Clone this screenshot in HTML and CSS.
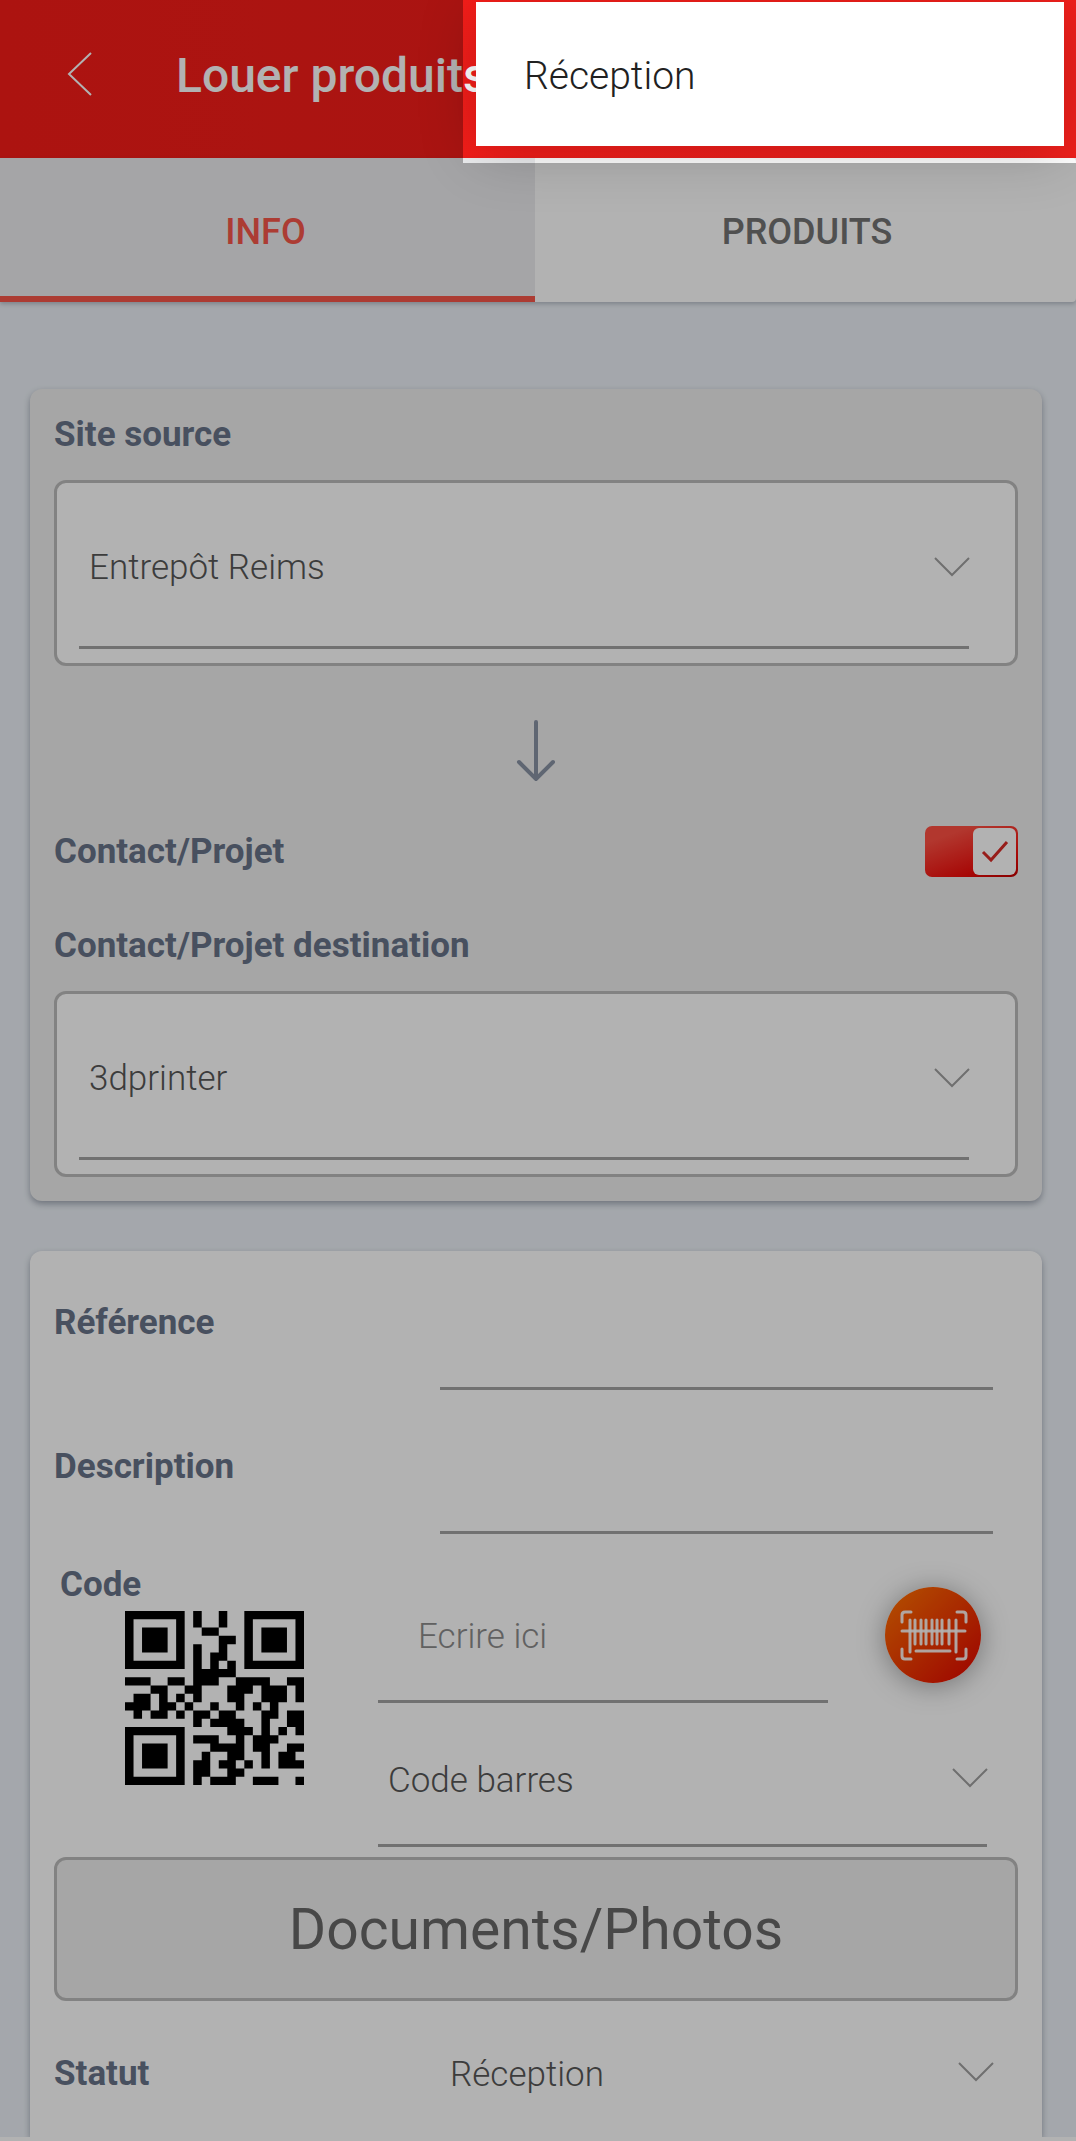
FILE: index.html
```
<!DOCTYPE html>
<html lang="fr">
<head>
<meta charset="utf-8">
<meta name="viewport" content="width=device-width, initial-scale=1">
<title>Louer produits</title>
<link rel="stylesheet" href="styles.css">
</head>
<body>
<header class="topbar">
  <button class="back" type="button" aria-label="Retour">
    <svg width="26" height="46" viewBox="0 0 26 46"><path d="M24 2 2 23 24 44"/></svg>
  </button>
  <h1 class="title">Louer produits</h1>
</header>

<nav class="tabs">
  <a class="tab tab-active" href="#info">INFO</a>
  <a class="tab" href="#produits">PRODUITS</a>
</nav>

<main class="content">
  <section class="card card-grey">
    <label class="label label-block" for="source">Site source</label>
    <div class="box">
      <div class="control control-boxed">
        <select id="source"><option>Entrepôt Reims</option></select>
        <svg class="chevron" width="36" height="20" viewBox="0 0 36 20"><path d="M1 1 18 18 35 1"/></svg>
      </div>
    </div>
    <svg class="arrow" width="40" height="62" viewBox="0 0 40 62"><path d="M20 3V59M3 43 20 60 37 43"/></svg>
    <div class="switch-row">
      <label class="label" for="contact">Contact/Projet</label>
      <span class="switch">
        <input id="contact" type="checkbox" checked>
        <svg class="knob" width="43" height="47" viewBox="0 0 43 47"><path d="M10 24 18 32 34 14"/></svg>
      </span>
    </div>
    <label class="label label-block" for="destination">Contact/Projet destination</label>
    <div class="box">
      <div class="control control-boxed">
        <select id="destination"><option>3dprinter</option></select>
        <svg class="chevron" width="36" height="20" viewBox="0 0 36 20"><path d="M1 1 18 18 35 1"/></svg>
      </div>
    </div>
  </section>

  <section class="card card-white">
    <div class="row">
      <label class="label" for="reference">Référence</label>
      <div class="control"><input id="reference" type="text"></div>
    </div>
    <div class="row">
      <label class="label" for="description">Description</label>
      <div class="control"><input id="description" type="text"></div>
    </div>
    <div class="code">
      <div class="code-side">
        <label class="label" for="code">Code</label>
        <svg class="qr" width="179" height="174" viewBox="0 0 21 21" preserveAspectRatio="none">
          <path fill-rule="evenodd" d="M0 0h7v7H0zM1 1v5h5V1zM2 2h3v3H2zM14 0h7v7h-7zM15 1v5h5V1zM16 2h3v3h-3zM0 14h7v7H0zM1 15v5h5v-5zM2 16h3v3H2z"/>
          <path d="M8 0h1v2H8zM11 0h1v2h-1zM9 2h2v1H9zM11 3h2v1h-2zM8 4h1v3H8zM11 4h1v2h-1zM10 5h1v2h-1zM12 6h1v1h-1zM8 7h5v1H8zM0 8h3v1H0zM5 8h2v1H5zM8 8h3v1H8zM13 8h4v1h-4zM19 8h2v1h-2zM3 9h2v1H3zM7 9h2v1H7zM12 9h3v1h-3zM16 9h3v2h-3zM20 9h1v2h-1zM1 10h2v1H1zM4 10h1v1H4zM6 10h1v1H6zM8 10h1v1H8zM12 10h2v1h-2zM0 11h3v1H0zM4 11h2v1H4zM7 11h1v1H7zM10 11h1v1h-1zM13 11h1v1h-1zM15 11h1v1h-1zM17 11h1v1h-1zM1 12h1v1H1zM3 12h2v1H3zM6 12h1v1H6zM8 12h2v1H8zM11 12h2v1h-2zM16 12h2v1h-2zM19 12h2v2h-2zM8 13h1v1H8zM10 13h4v1h-4zM16 13h1v2h-1zM12 14h3v1h-3zM18 14h1v1h-1zM20 14h1v1h-1zM8 15h3v1H8zM13 15h1v1h-1zM15 15h3v1h-3zM10 16h4v1h-4zM15 16h2v1h-2zM19 16h2v1h-2zM9 17h1v1H9zM12 17h2v1h-2zM16 17h1v2h-1zM18 17h2v1h-2zM8 18h2v2H8zM11 18h2v1h-2zM14 18h1v1h-1zM18 18h3v1h-3zM12 19h2v1h-2zM8 20h1v1H8zM10 20h3v1h-3zM15 20h3v1h-3zM20 20h1v1h-1z"/>
        </svg>
      </div>
      <div class="code-fields">
        <div class="scan-row">
          <div class="control control-entry"><input id="code" type="text" placeholder="Ecrire ici"></div>
          <button class="scan" type="button" aria-label="Scanner">
            <svg width="96" height="96" viewBox="0 0 96 96">
              <g class="frame"><path d="M17 35V28Q17 25 20 25H26M72 25H78Q81 25 81 28V35M17 62V69Q17 72 20 72H26M72 72H78Q81 72 81 69V62"/><path d="M17 44H80M31 64H65"/></g>
              <g class="bars"><path d="M25 33V65M30 33V57M36 33V57M41 33V57M47 33V57M52 33V57M57 33V57M64 33V57M71 33V65"/></g>
            </svg>
          </button>
        </div>
        <div class="control">
          <select aria-label="Type de code"><option>Code barres</option></select>
          <svg class="chevron" width="36" height="20" viewBox="0 0 36 20"><path d="M1 1 18 18 35 1"/></svg>
        </div>
      </div>
    </div>
    <button class="documents" type="button">Documents/Photos</button>
    <div class="row row-last">
      <label class="label" for="statut">Statut</label>
      <div class="control control-plain">
        <select id="statut"><option>Réception</option></select>
        <svg class="chevron" width="36" height="20" viewBox="0 0 36 20"><path d="M1 1 18 18 35 1"/></svg>
      </div>
    </div>
  </section>
</main>
<footer class="bottom-edge"></footer>

<div class="spotlight"></div>
<button class="popup" type="button">Réception</button>
</body>
</html>
```
FILE: styles.css
```
* {
  box-sizing: border-box;
}

body {
  position: relative;
  margin: 0;
  overflow-x: hidden;
  background: #ebf0f6;
  color: #575757;
  font-family: Roboto, "Liberation Sans", sans-serif;
  font-size: 35px;
  font-weight: 300;
}

button,
input,
select {
  margin: 0;
  padding: 0;
  border: 0;
  border-radius: 0;
  background: none;
  color: inherit;
  font: inherit;
}

svg {
  display: block;
  fill: none;
}

/* Header and tabs */
.topbar {
  display: flex;
  align-items: center;
  height: 158px;
  padding: 0 67px;
  gap: 83px;
  background: linear-gradient(to right, #f71c18, #f0201c);
  color: #fff;
}

.back {
  margin-top: -10px;
}

.back svg {
  stroke: #fff;
  stroke-width: 2;
}

.title {
  margin: -6px 0 0;
  font-size: 48px;
  font-weight: 500;
  line-height: 56px;
  white-space: nowrap;
}

.tabs {
  display: grid;
  grid-template-columns: 1fr 1fr;
  height: 144px;
  border-radius: 0 4px 4px 0;
  background: #fff;
  box-shadow: 0 2px 4px rgba(60, 70, 90, .3);
}

.tab {
  padding-top: 10px;
  border-bottom: 6px solid transparent;
  color: #737373;
  font-size: 36px;
  font-weight: 500;
  line-height: 128px;
  text-align: center;
  text-decoration: none;
}

.tab-active {
  margin-right: 3px;
  padding-right: 4px;
  border-bottom-color: #f6564a;
  background: #ecedef;
  color: #f6564a;
}

/* Cards */
.content {
  display: flex;
  flex-direction: column;
  gap: 50px;
  padding: 87px 34px 0 30px;
}

.card {
  padding: 24px;
  border-radius: 12px;
  box-shadow: 0 3px 6px rgba(50, 60, 80, .4);
}

.card-grey {
  background: #eee;
}

.card-white {
  padding-top: 0;
  padding-bottom: 0;
  border-radius: 12px 12px 0 0;
  background: #fff;
}

.label {
  color: #677389;
  font-size: 35px;
  font-weight: 700;
  line-height: 44px;
}

.label-block {
  display: block;
  margin-bottom: 23px;
}

.box {
  padding: 0 46px 14px 22px;
  border: 3px solid #bbb;
  border-radius: 12px;
  background: #fff;
}

/* Underlined fields */
.control {
  position: relative;
  height: 139px;
  padding-top: 8px;
  border-bottom: 3px solid #a3a3a3;
}

.control input,
.control select {
  display: block;
  width: 100%;
  height: 100%;
  padding-left: 10px;
  outline: 0;
  appearance: none;
}

.control-boxed {
  height: 166px;
  padding-top: 5px;
}

.control-plain {
  border-bottom-color: transparent;
}

.control-entry {
  width: 450px;
}

.control-entry input {
  padding-left: 40px;
}

.control-entry input::placeholder {
  color: #8c8c8c;
  opacity: 1;
}

.chevron {
  position: absolute;
  top: 50%;
  right: -1px;
  margin-top: -8px;
  stroke: #a0a0a0;
  stroke-width: 2;
  pointer-events: none;
}

.arrow {
  margin: 53px auto 45px;
  stroke: #8892a4;
  stroke-width: 4;
  stroke-linecap: round;
}

.switch-row {
  display: flex;
  align-items: center;
  justify-content: space-between;
  margin-bottom: 47px;
}

.switch {
  display: grid;
  align-items: center;
  justify-items: end;
  width: 93px;
}

.switch input {
  grid-area: 1 / 1;
  width: 93px;
  height: 51px;
  border-radius: 7px;
  background: linear-gradient(160deg, #ff5043 20%, #f00c0a 75%, #c00000);
  appearance: none;
}

.knob {
  grid-area: 1 / 1;
  margin-right: 2px;
  border-radius: 6px;
  background: #fff;
  stroke: #d82a26;
  stroke-width: 3;
  pointer-events: none;
}

.row {
  display: grid;
  grid-template-columns: 386px 1fr;
  align-items: center;
  height: 144px;
  padding-right: 25px;
}

.row .control {
  align-self: start;
}

.row-last {
  height: 136px;
}

.row-last .control {
  height: 136px;
  padding-top: 13px;
}

.row-last .label {
  padding-top: 9px;
}

.row-last .chevron {
  margin-top: -6px;
}

.code {
  display: grid;
  grid-template-columns: 324px 1fr;
  padding: 24px 31px 5px 0;
}

.code-side {
  padding-left: 6px;
}

.code-side .label {
  display: block;
  margin-bottom: 4px;
}

.qr {
  margin-left: 65px;
  fill: #000;
}

.code-fields {
  display: grid;
  gap: 5px;
  padding: 1px 0 5px;
}

.scan-row {
  display: flex;
  justify-content: space-between;
}

.scan {
  width: 96px;
  height: 96px;
  margin: 23px 6px 0 0;
  border-radius: 50%;
  background: linear-gradient(135deg, #ff6a00 10%, #e61400 85%);
  box-shadow: 0 3px 28px rgba(0, 0, 0, .35);
}

.frame {
  stroke: #fff;
  stroke-width: 3;
  stroke-linecap: round;
}

.bars {
  stroke: #fff;
  stroke-width: 3;
  stroke-linecap: round;
}

.frame,
.bars {
  opacity: .9;
}

.documents {
  display: block;
  width: 100%;
  height: 144px;
  border: 3px solid #bbb;
  border-radius: 12px;
  background: #eee;
  color: #686868;
  font-size: 57px;
  font-weight: 400;
}

.bottom-edge {
  position: relative;
  height: 4px;
  background: #fff;
}

/* Dimmed page with a lit area behind the popup */
.spotlight {
  position: absolute;
  top: 0;
  right: 0;
  left: 463px;
  height: 163px;
  box-shadow: 0 0 0 3000px rgba(0, 0, 0, .3);
  pointer-events: none;
}

.popup {
  position: absolute;
  top: 2px;
  right: 12px;
  left: 476px;
  height: 144px;
  padding: 4px 0 0 48px;
  background: #fff;
  box-shadow: 0 8px 60px rgba(0, 0, 0, .2);
  color: #212121;
  font-size: 39px;
  text-align: left;
}
```
